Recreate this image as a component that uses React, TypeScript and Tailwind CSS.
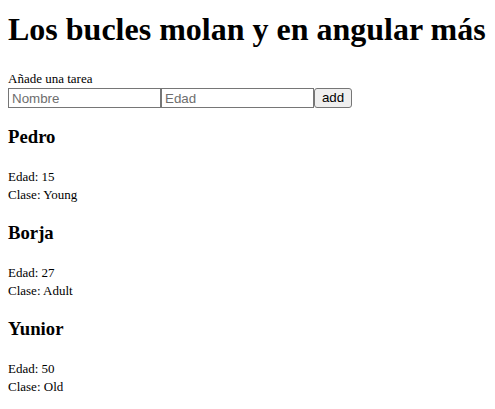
const people = [
  { name: 'Pedro', age: 15, kind: 'Young' },
  { name: 'Borja', age: 27, kind: 'Adult' },
  { name: 'Yunior', age: 50, kind: 'Old' },
];

export default function App() {
  return (
    <div className="px-2 font-['Liberation_Serif','Times_New_Roman',serif] text-black bg-white min-h-screen">
      <h1 className="pt-[11px] text-[32px] leading-[37px] font-bold whitespace-nowrap">
        Los bucles molan y en angular más
      </h1>

      <div className="mt-[23px] text-[13px] leading-[15px]">Añade una tarea</div>
      <div className="flex mt-[2px] font-['Liberation_Sans',Arial,sans-serif] text-[13.33px]">
        <input
          placeholder="Nombre"
          className="w-[153px] h-[20px] px-[3px] border border-[#767676] placeholder:text-[#6e6e6e] outline-none"
        />
        <input
          placeholder="Edad"
          className="w-[153px] h-[20px] px-[3px] border border-[#767676] placeholder:text-[#6e6e6e] outline-none"
        />
        <button className="w-[38px] h-[20px] bg-[#efefef] border border-[#767676] rounded-[3px] leading-none">
          add
        </button>
      </div>

      <div className="flex flex-col pt-[18px]">
        {people.map((p, i) => (
          <div key={p.name} className={i > 0 ? 'mt-[18px]' : ''}>
            <h3 className="text-[18.72px] leading-[22px] font-bold">{p.name}</h3>
            <div className="mt-[20px] text-[13px] leading-[18px]">Edad: {p.age}</div>
            <div className="text-[13px] leading-[18px]">Clase: {p.kind}</div>
          </div>
        ))}
      </div>
    </div>
  );
}
